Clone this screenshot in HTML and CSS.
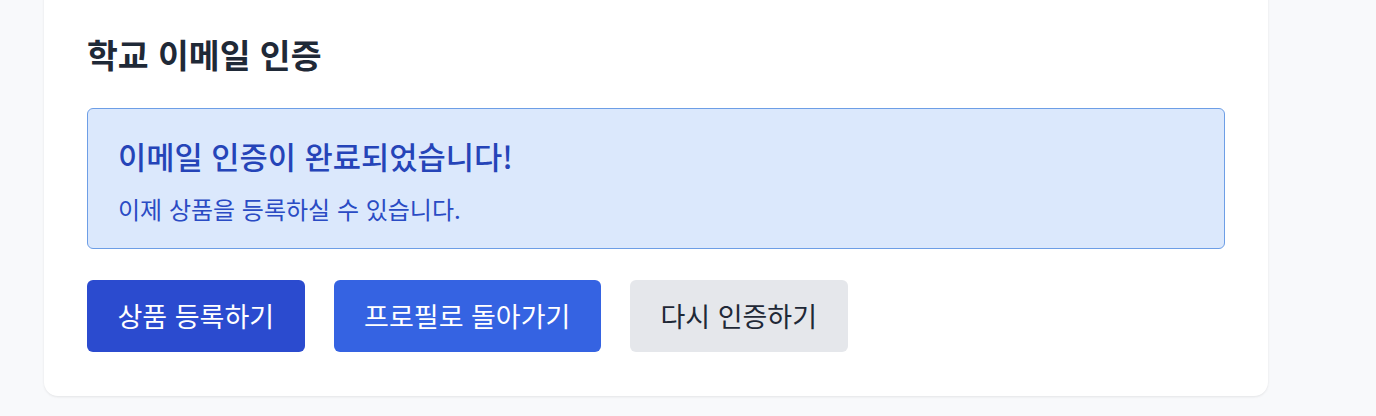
FILE: index.html
```html
<!DOCTYPE html>
<html lang="ko">
<head>
<meta charset="utf-8">
<title>학교 이메일 인증</title>
<link rel="stylesheet" href="styles.css">
</head>
<body>
<main class="page">
  <section class="card">
    <h2 class="card-title">학교 이메일 인증</h2>
    <div class="notice">
      <p class="notice-title">이메일 인증이 완료되었습니다!</p>
      <p class="notice-text">이제 상품을 등록하실 수 있습니다.</p>
    </div>
    <div class="actions">
      <button class="btn btn-primary">상품 등록하기</button>
      <button class="btn btn-secondary">프로필로 돌아가기</button>
      <button class="btn btn-gray">다시 인증하기</button>
    </div>
  </section>
</main>
</body>
</html>
```

FILE: styles.css
```css
* { box-sizing: border-box; }
html, body {
  margin: 0;
  padding: 0;
  background: #f8f9fb;
  font-family: "Noto Sans CJK KR", "Noto Sans", sans-serif;
}
.page {
  padding: 0 108px 20px 44px;
}
.card {
  width: 1224px;
  margin-top: -24px;
  padding: 57px 43px 44px 43px;
  background: #ffffff;
  border-radius: 14px;
  box-shadow: 0 1px 3px rgba(0, 0, 0, 0.06), 0 1px 2px rgba(0, 0, 0, 0.03);
}
.card-title {
  margin: 0 0 33px 0;
  font-size: 33.5px;
  line-height: 42px;
  font-weight: 700;
  color: #1f2937;
}
.notice {
  border: 1px solid #6d9ee6;
  background: #dbe8fc;
  border-radius: 6px;
  padding: 27px 30px 23px 30px;
}
.notice-title {
  margin: 0;
  font-size: 30.7px;
  line-height: 40px;
  font-weight: 500;
  color: #2544b8;
}
.notice-text {
  margin: 17px 0 0 0;
  font-size: 24px;
  line-height: 32px;
  color: #2a4bc4;
}
.actions {
  display: flex;
  gap: 29px;
  margin-top: 31px;
}
.btn {
  border: none;
  border-radius: 6px;
  padding: 18px 30.5px;
  font-family: inherit;
  font-size: 27px;
  line-height: 36px;
  font-weight: 400;
  cursor: pointer;
}
.btn-primary {
  background: #2b4bcf;
  color: #ffffff;
}
.btn-secondary {
  background: #3563e2;
  color: #ffffff;
}
.btn-gray {
  background: #e5e7eb;
  color: #1f2937;
}
```
